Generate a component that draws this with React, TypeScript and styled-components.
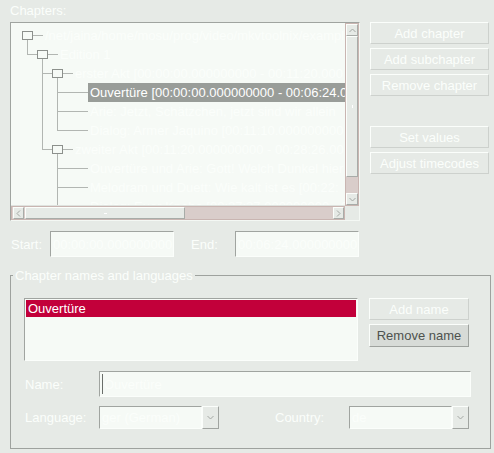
import React from 'react';
import styled, { createGlobalStyle, css } from 'styled-components';

const GlobalStyle = createGlobalStyle`
  html, body { margin: 0; padding: 0; background: #e6eae6; }
  body { font-family: "Liberation Sans", Arial, sans-serif; font-size: 13px; }
  * { box-sizing: border-box; }
`;

const FAINT = '#fbfefb';
const LINE = '#b2b6b2';

const Page = styled.div`
  width: 494px;
  height: 453px;
  padding: 3px 5px 0 10px;
  background: #e6eae6;
  color: ${FAINT};
  font-size: 13px;
  line-height: 15px;
  overflow: hidden;
`;

const Caption = styled.div`
  height: 15px;
  margin-bottom: 4px;
`;

const TopRow = styled.div`
  display: flex;
  align-items: flex-start;
  gap: 10px;
`;

const TreeFrame = styled.div`
  width: 350px;
  height: 199px;
  border: 1px solid;
  border-color: #a0a4a0 #f4f8f4 #f4f8f4 #a0a4a0;
  display: grid;
  grid-template-columns: 1fr 14px;
  grid-template-rows: 1fr 14px;
`;

const Viewport = styled.div`
  background: #f6faf6;
  overflow: hidden;
  padding: 3px 0 0 9px;
  border-bottom: 1px solid #dfe3df;
  min-width: 0;
`;

const Row = styled.div`
  display: flex;
  height: 19px;
  white-space: nowrap;
  overflow: hidden;
`;

type Guide = 'blank' | 'pipe' | 'tee' | 'elbow';

const GuideCell = styled.div<{ $type: Guide }>`
  position: relative;
  flex: none;
  width: 15px;
  ${(p) =>
    p.$type !== 'blank' &&
    css`
      &::before {
        content: '';
        position: absolute;
        left: 7px;
        top: 0;
        width: 1px;
        height: ${p.$type === 'elbow' ? '10px' : '19px'};
        background: ${LINE};
      }
    `}
  ${(p) =>
    (p.$type === 'tee' || p.$type === 'elbow') &&
    css`
      &::after {
        content: '';
        position: absolute;
        left: 7px;
        right: 0;
        top: 9px;
        height: 1px;
        background: ${LINE};
      }
    `}
`;

const NodeCell = styled.div<{ $root?: boolean; $open?: boolean }>`
  position: relative;
  flex: none;
  width: 23px;
  &::before {
    content: '';
    position: absolute;
    left: ${(p) => (p.$root ? '12px' : '0')};
    right: 0;
    top: 9px;
    height: 1px;
    background: ${LINE};
  }
  ${(p) =>
    p.$open &&
    css`
      &::after {
        content: '';
        position: absolute;
        left: 7px;
        top: 14px;
        bottom: 0;
        width: 1px;
        background: ${LINE};
      }
    `}
`;

const Expander = styled.span`
  position: absolute;
  left: 2px;
  top: 5px;
  width: 11px;
  height: 9px;
  border: 1px solid #8c908c;
  background: #f6faf6;
`;

const NodeText = styled.span<{ $selected?: boolean }>`
  display: block;
  flex: 1 1 auto;
  min-width: 0;
  overflow: hidden;
  height: 19px;
  line-height: 19px;
  padding: 0 0 0 2px;
  color: ${FAINT};
  ${(p) =>
    p.$selected &&
    css`
      color: #ffffff;
      background: #999d99;
    `}
`;

const ScrollBar = styled.div<{ $vertical?: boolean }>`
  display: flex;
  flex-direction: ${(p) => (p.$vertical ? 'column' : 'row')};
  background: #d9cdca;
  border: 1px solid #c9b5b1;
  padding: ${(p) => (p.$vertical ? '0' : '0 0 0 1px')};
`;

const ScrollButton = styled.div<{ $vertical?: boolean }>`
  flex: none;
  width: ${(p) => (p.$vertical ? '12px' : '11px')};
  height: 12px;
  background: #e6eae6;
  border: 1px solid;
  border-color: #fbfefb #a8aca8 #a8aca8 #fbfefb;
  display: flex;
  align-items: center;
  justify-content: center;
`;

const Thumb = styled.div<{ $vertical?: boolean; $size: number; $offset: number }>`
  flex: none;
  ${(p) =>
    p.$vertical
      ? css`
          height: ${p.$size}px;
          margin-top: ${p.$offset}px;
        `
      : css`
          width: ${p.$size}px;
          margin-left: ${p.$offset}px;
        `}
  background: #e6eae6;
  border: 1px solid;
  border-color: #fbfefb #a8aca8 #a8aca8 #fbfefb;
  display: flex;
  align-items: center;
  justify-content: center;
`;

const Grip = styled.span<{ $vertical?: boolean }>`
  width: ${(p) => (p.$vertical ? '1px' : '3px')};
  height: ${(p) => (p.$vertical ? '3px' : '1px')};
  background: #ffffff;
`;

const TrackFill = styled.div`
  flex: 1;
`;

const Corner = styled.div`
  background: #e6eae6;
`;

const ButtonColumn = styled.div<{ $width: number }>`
  display: flex;
  flex-direction: column;
  gap: 4px;
  width: ${(p) => p.$width}px;
  flex: none;
`;

const ButtonGap = styled.div`
  height: 22px;
`;

const Button = styled.div<{ $enabled?: boolean; $h?: number }>`
  height: ${(p) => p.$h ?? 22}px;
  display: flex;
  align-items: center;
  justify-content: center;
  border: 1px solid;
  border-color: ${(p) =>
    p.$enabled ? '#fbfefb #9ea29e #9ea29e #fbfefb' : '#fbfefb #cdd1cd #cdd1cd #fbfefb'};
  background: ${(p) => (p.$enabled ? '#d7dbd7' : '#e6eae6')};
  color: ${(p) => (p.$enabled ? '#4e524e' : FAINT)};
  white-space: nowrap;
`;

const TimeRow = styled.div`
  display: flex;
  align-items: center;
  margin-top: 10px;
  height: 26px;
`;

const Label = styled.span<{ $width: number; $gap?: number }>`
  flex: none;
  width: ${(p) => p.$width}px;
  margin-left: ${(p) => p.$gap ?? 0}px;
  padding-left: 1px;
`;

const Field = styled.div<{ $width?: number; $h?: number }>`
  ${(p) => (p.$width ? `width: ${p.$width}px; flex: none;` : 'flex: 1;')}
  height: ${(p) => p.$h ?? 26}px;
  display: flex;
  align-items: center;
  padding: 0 0 0 2px;
  background: #f6faf6;
  border: 1px solid;
  border-color: #a0a4a0 #fbfefb #fbfefb #a0a4a0;
  color: ${FAINT};
  white-space: nowrap;
  overflow: hidden;
`;

const Caret = styled.span`
  flex: none;
  width: 1px;
  height: 20px;
  margin-right: 1px;
  background: #6a6e6a;
`;

const Group = styled.fieldset`
  margin: 11px 0 0 0;
  padding: 0;
  width: 481px;
  height: 181px;
  border: 1px solid #9ea29e;
  min-width: 0;
`;

const Legend = styled.legend`
  margin-left: 2px;
  padding: 0 2px;
  line-height: 15px;
  height: 15px;
`;

const GroupBody = styled.div`
  padding: 15px 19px 0 13px;
`;

const ListRow = styled.div`
  display: flex;
  gap: 11px;
  align-items: flex-start;
`;

const ListBox = styled.div`
  width: 334px;
  height: 63px;
  padding: 1px;
  background: #f6faf6;
  border: 1px solid;
  border-color: #a0a4a0 #fbfefb #fbfefb #a0a4a0;
`;

const ListItem = styled.div<{ $selected?: boolean }>`
  height: 17px;
  line-height: 17px;
  padding-left: 2px;
  background: ${(p) => (p.$selected ? '#c2003a' : 'transparent')};
  color: #ffffff;
`;

const FormRow = styled.div<{ $top: number }>`
  display: flex;
  align-items: center;
  margin-top: ${(p) => p.$top}px;
`;

const Combo = styled.div<{ $width: number }>`
  display: flex;
  flex: none;
  width: ${(p) => p.$width}px;
  height: 23px;
`;

const ComboButton = styled.div`
  flex: none;
  width: 17px;
  background: #e6eae6;
  border: 1px solid;
  border-color: #fbfefb #a0a4a0 #a0a4a0 #fbfefb;
  display: flex;
  align-items: center;
  justify-content: center;
`;

const Arrow = ({ dir }: { dir: 'up' | 'down' | 'left' | 'right' }) => {
  const pts: Record<string, string> = {
    up: '0.5,4 3.5,1 6.5,4',
    down: '0.5,1 3.5,4 6.5,1',
    left: '4,0.5 1,3.5 4,6.5',
    right: '1,0.5 4,3.5 1,6.5',
  };
  const vertical = dir === 'up' || dir === 'down';
  return (
    <svg width={vertical ? 7 : 5} height={vertical ? 5 : 7} viewBox={vertical ? '0 0 7 5' : '0 0 5 7'}>
      <polyline points={pts[dir]} fill="none" stroke="#a4a8a4" strokeWidth="1" />
    </svg>
  );
};

interface TreeNode {
  guides: Guide[];
  text: string;
  open?: boolean;
  selected?: boolean;
}

const nodes: TreeNode[] = [
  { guides: [], open: true, text: '/net/jaina/home/mosu/prog/video/mkvtoolnix/exampl' },
  { guides: ['elbow'], open: true, text: 'Edition 1' },
  { guides: ['blank', 'tee'], open: true, text: 'erster Akt [00:00:00.000000000 - 00:11:20.000' },
  { guides: ['blank', 'pipe', 'tee'], selected: true, text: 'Ouvertüre [00:00:00.000000000 - 00:06:24.0' },
  { guides: ['blank', 'pipe', 'tee'], text: 'Arie: Jetzt, Schätzchen, jetzt sind wir allein' },
  { guides: ['blank', 'pipe', 'elbow'], text: 'Dialog: Armer Jaquino [00:11:10.000000000' },
  { guides: ['blank', 'elbow'], open: true, text: 'zweiter Akt [00:11:20.000000000 - 00:28:26.00' },
  { guides: ['blank', 'blank', 'tee'], text: 'Ouvertüre und Arie: Gott! Welch Dunkel hier' },
  { guides: ['blank', 'blank', 'tee'], text: 'Melodram und Duett: Wie kalt ist es [00:22:' },
  { guides: ['blank', 'blank', 'tee'], text: 'Dialog: Euer Knabe [00:27:27.000000000 - 0' },
];

export default function App() {
  return (
    <>
      <GlobalStyle />
      <Page>
        <Caption>Chapters:</Caption>
        <TopRow>
          <TreeFrame>
            <Viewport>
              {nodes.map((n, i) => (
                <Row key={i}>
                  {n.guides.map((g, j) => (
                    <GuideCell key={j} $type={g} />
                  ))}
                  <NodeCell $root={n.guides.length === 0} $open={n.open}>
                    {n.open && <Expander />}
                  </NodeCell>
                  <NodeText $selected={n.selected}>{n.text}</NodeText>
                </Row>
              ))}
            </Viewport>
            <ScrollBar $vertical>
              <ScrollButton $vertical>
                <Arrow dir="up" />
              </ScrollButton>
              <Thumb $vertical $size={141} $offset={0}>
                <Grip $vertical />
              </Thumb>
              <TrackFill />
              <ScrollButton $vertical>
                <Arrow dir="down" />
              </ScrollButton>
            </ScrollBar>
            <ScrollBar>
              <ScrollButton>
                <Arrow dir="left" />
              </ScrollButton>
              <Thumb $size={160} $offset={1}>
                <Grip />
              </Thumb>
              <TrackFill />
              <ScrollButton>
                <Arrow dir="right" />
              </ScrollButton>
            </ScrollBar>
            <Corner />
          </TreeFrame>
          <ButtonColumn $width={119}>
            <Button>Add chapter</Button>
            <Button>Add subchapter</Button>
            <Button>Remove chapter</Button>
            <ButtonGap />
            <Button>Set values</Button>
            <Button>Adjust timecodes</Button>
          </ButtonColumn>
        </TopRow>

        <TimeRow>
          <Label $width={40}>Start:</Label>
          <Field $width={124}>00:00:00.000000000</Field>
          <Label $width={45} $gap={16}>End:</Label>
          <Field $width={124}>00:06:24.000000000</Field>
        </TimeRow>

        <Group>
          <Legend>Chapter names and languages</Legend>
          <GroupBody>
            <ListRow>
              <ListBox>
                <ListItem $selected>Ouvertüre</ListItem>
              </ListBox>
              <ButtonColumn $width={100}>
                <Button>Add name</Button>
                <Button $enabled $h={23}>
                  Remove name
                </Button>
              </ButtonColumn>
            </ListRow>
            <FormRow $top={10}>
              <Label $width={75}>Name:</Label>
              <Field>
                <Caret />
                Ouvertüre
              </Field>
            </FormRow>
            <FormRow $top={9}>
              <Label $width={75}>Language:</Label>
              <Combo $width={120}>
                <Field $h={23}>ger (German)</Field>
                <ComboButton>
                  <Arrow dir="down" />
                </ComboButton>
              </Combo>
              <Label $width={75} $gap={55}>Country:</Label>
              <Combo $width={120}>
                <Field $h={23}>de</Field>
                <ComboButton>
                  <Arrow dir="down" />
                </ComboButton>
              </Combo>
            </FormRow>
          </GroupBody>
        </Group>
      </Page>
    </>
  );
}
